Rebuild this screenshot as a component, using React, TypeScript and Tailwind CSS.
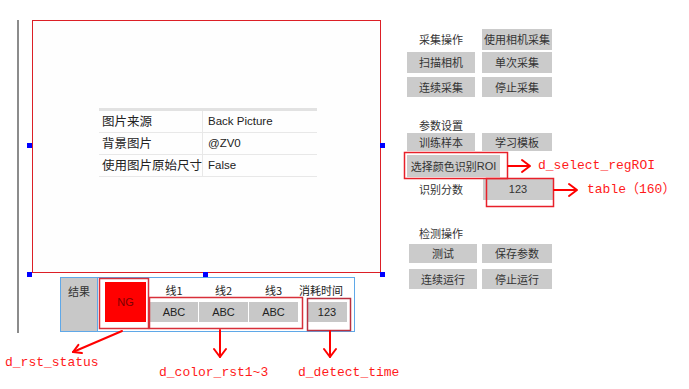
import React from "react";

const cjk = { fontFamily: '"Noto Sans CJK SC", "Liberation Sans", sans-serif' };
const mono = { fontFamily: '"Liberation Mono", "Noto Sans CJK SC", monospace' };

function Btn({ children, className = "" }: { children: React.ReactNode; className?: string }) {
  return (
    <div className={`flex items-center justify-center bg-[#cbcbcb] text-[11px] text-[#333] whitespace-nowrap ${className}`}>
      {children}
    </div>
  );
}

function Label({ children, className = "" }: { children: React.ReactNode; className?: string }) {
  return (
    <div className={`flex items-center justify-center text-[11px] text-[#333] whitespace-nowrap ${className}`}>
      {children}
    </div>
  );
}

function PropTable() {
  const rows: [string, string][] = [
    ["图片来源", "Back Picture"],
    ["背景图片", "@ZV0"],
    ["使用图片原始尺寸", "False"],
  ];
  return (
    <div className="mt-[87px] ml-[66px] w-[218px]">
      <div className="h-[3px] bg-[#e2e2e2]" />
      {rows.map(([k, v], i) => (
        <div key={i} className="flex h-[22px] border-b border-[#e8e8e8]">
          <div className="w-[104px] border-r border-[#e8e8e8] pl-[3px] flex items-center text-[12.5px] text-[#222]">
            {k}
          </div>
          <div
            className="pl-[5px] flex items-center text-[11.5px] text-[#222]"
            style={{ fontFamily: '"Liberation Sans", sans-serif' }}
          >
            {v}
          </div>
        </div>
      ))}
    </div>
  );
}

function Result() {
  const lines = ["线1", "线2", "线3"];
  const widths = ["w-[48px]", "w-[49px]", "w-[49px]"];
  return (
    <div className="mt-[4px] ml-[28px] flex h-[55px]">
      <div className="w-[37px] h-full bg-[#c8c8c8] border border-r-0 border-[#5fa8e8] flex justify-center pt-[5px] text-[11px] text-[#333]">
        结果
      </div>
      <div className="w-[258px] h-full border border-[#5fa8e8] flex items-start">
        <div
          className="ml-[7px] mt-[4px] w-[41px] h-[40px] bg-[#ff0000] flex items-center justify-center text-[11px] text-[#7a0000]"
          style={{ fontFamily: '"Liberation Sans", sans-serif' }}
        >
          NG
        </div>
        <div className="ml-[4px] flex gap-[1px]">
          {lines.map((l, i) => (
            <div key={i} className={`flex flex-col ${widths[i]}`}>
              <div className="h-[24px] flex items-center justify-center text-[11px] text-[#222]">{l}</div>
              <div
                className="h-[20px] bg-[#c8c8c8] flex items-center justify-center text-[11px] text-[#222]"
                style={{ fontFamily: '"Liberation Sans", sans-serif' }}
              >
                ABC
              </div>
            </div>
          ))}
        </div>
        <div className="ml-[9px] flex flex-col w-[40px]">
          <div className="h-[24px] -ml-[12px] w-[52px] flex items-center justify-center text-[11px] text-[#222] whitespace-nowrap">
            消耗时间
          </div>
          <div
            className="h-[20px] bg-[#c8c8c8] flex items-center justify-center text-[11px] text-[#222]"
            style={{ fontFamily: '"Liberation Sans", sans-serif' }}
          >
            123
          </div>
        </div>
      </div>
    </div>
  );
}

function RightPanel() {
  return (
    <div className="ml-[26px] flex flex-col w-[150px]">
      <div className="mt-[9px] h-[21px] flex">
        <Label className="w-[68px]">采集操作</Label>
        <Btn className="ml-[7px] w-[70px]">使用相机采集</Btn>
      </div>
      <div className="mt-[2px] h-[21px] flex">
        <Btn className="w-[68px]">扫描相机</Btn>
        <Btn className="ml-[7px] w-[70px]">单次采集</Btn>
      </div>
      <div className="mt-[4px] h-[20px] flex">
        <Btn className="w-[68px]">连续采集</Btn>
        <Btn className="ml-[7px] w-[70px]">停止采集</Btn>
      </div>
      <div className="mt-[20px] h-[16px] flex">
        <Label className="w-[68px]">参数设置</Label>
      </div>
      <div className="h-[18px] flex">
        <Btn className="w-[68px]">训练样本</Btn>
        <Btn className="ml-[7px] w-[70px]">学习模板</Btn>
      </div>
      <div className="mt-[4px] h-[22px] flex">
        <Btn className="w-[93px]" >
          <span>选择颜色识别</span>
          <span style={{ fontFamily: '"Liberation Sans", sans-serif' }}>ROI</span>
        </Btn>
      </div>
      <div className="mt-[2px] h-[21px] flex">
        <Label className="w-[68px]">识别分数</Label>
        <Btn className="ml-[8px] w-[70px]">
          <span style={{ fontFamily: '"Liberation Sans", sans-serif' }}>123</span>
        </Btn>
      </div>
      <div className="mt-[26px] h-[14px] flex">
        <Label className="w-[68px]">检测操作</Label>
      </div>
      <div className="mt-[4px] h-[19px] flex">
        <Btn className="ml-[2px] w-[68px]">测试</Btn>
        <Btn className="ml-[5px] w-[70px]">保存参数</Btn>
      </div>
      <div className="mt-[6px] h-[20px] flex">
        <Btn className="ml-[2px] w-[68px]">连续运行</Btn>
        <Btn className="ml-[5px] w-[70px]">停止运行</Btn>
      </div>
    </div>
  );
}

function Overlay() {
  const red = "#ff0000";
  return (
    <svg className="absolute left-0 top-0 pointer-events-none" width={689} height={389} viewBox="0 0 689 389">
      {/* selection handles */}
      <rect x={27} y={272} width={5} height={5} fill="#0000ff" />
      <rect x={203} y={272} width={5} height={5} fill="#0000ff" />
      <rect x={380} y={272} width={5} height={5} fill="#0000ff" />
      <rect x={27} y={143} width={5} height={5} fill="#0000ff" />
      <rect x={380} y={143} width={5} height={5} fill="#0000ff" />
      {/* annotation boxes */}
      <rect x={404.5} y={152.5} width={103} height={26} fill="none" stroke="#e8202a" strokeWidth={1.5} />
      <rect x={486.5} y={178.5} width={67} height={28} fill="none" stroke="#e8202a" strokeWidth={1.5} />
      <rect x={99.5} y={278.5} width={49} height={50} fill="none" stroke="#d8303a" strokeWidth={1.5} />
      <rect x={149.5} y={297.5} width={153} height={31} fill="none" stroke="#d8303a" strokeWidth={1.5} />
      <rect x={307.5} y={298.5} width={43} height={32} fill="none" stroke="#b83040" strokeWidth={1.5} />
      {/* arrows */}
      <g stroke={red} strokeWidth={2} fill="none" strokeLinecap="round" strokeLinejoin="round">
        <line x1={508} y1={166} x2={529} y2={166} />
        <polyline points="522,160 530,166 522,172" />
        <line x1={554} y1={190} x2={576} y2={190} />
        <polyline points="569,184 577,190 569,196" />
        <line x1={122} y1={331} x2={73} y2={352} />
        <polyline points="78.4,344.8 73,352 81.9,353.1" />
        <line x1={220} y1={330} x2={220} y2={357} />
        <polyline points="214,349 220,357 226,349" />
        <line x1={330} y1={331} x2={330} y2={357} />
        <polyline points="324,349 330,357 336,349" />
      </g>
    </svg>
  );
}

function Notes() {
  const cls = "absolute text-[13px] leading-[16px] text-[#ff1a1a] whitespace-nowrap";
  return (
    <>
      <span className={`${cls} left-[538px] top-[158px]`} style={mono}>d_select_regROI</span>
      <span className={`${cls} left-[587px] top-[182px]`} style={mono}>table（160）</span>
      <span className={`${cls} left-[5px] top-[355px]`} style={mono}>d_rst_status</span>
      <span className={`${cls} left-[159px] top-[365px]`} style={mono}>d_color_rst1~3</span>
      <span className={`${cls} left-[298px] top-[365px]`} style={mono}>d_detect_time</span>
    </>
  );
}

export default function App() {
  return (
    <div className="relative w-[689px] h-[389px] bg-white overflow-hidden" style={cjk}>
      <div className="flex pt-[20px]">
        <div className="ml-[17px] border-l-2 border-[#8c8c8c] h-[313px] pl-[13px]">
          <div className="w-[349px] h-[253px] border border-[#dc1f26] bg-[#fefefe]">
            <PropTable />
          </div>
          <Result />
        </div>
        <RightPanel />
      </div>
      <Overlay />
      <Notes />
    </div>
  );
}
